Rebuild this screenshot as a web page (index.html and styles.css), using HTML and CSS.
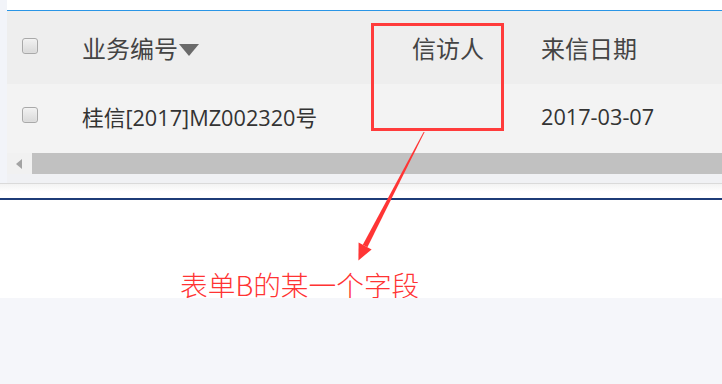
FILE: index.html
```html
<!DOCTYPE html>
<html>
<head>
<meta charset="utf-8" />
<title>表单字段</title>
<link rel="stylesheet" href="styles.css">
</head>
<body>
<div class="page">
  <div class="panel">
    <div class="panel_top"></div>
    <div class="grid">
      <div class="row head">
        <div class="cell chk"><span class="box"></span></div>
        <div class="cell">业务编号<span class="sort"></span></div>
        <div class="cell right">信访人</div>
        <div class="cell date">来信日期</div>
      </div>
      <div class="row body_row">
        <div class="cell chk"><span class="box"></span></div>
        <div class="cell">桂信[2017]MZ002320号</div>
        <div class="cell right"></div>
        <div class="cell date">2017-03-07</div>
      </div>
      <div class="scroll">
        <div class="scroll_btn"><span class="arrow_left"></span></div>
        <div class="scroll_thumb"></div>
      </div>
      <div class="grid_foot"></div>
    </div>
  </div>
  <div class="shade"></div>
  <div class="note_area">
    <div class="caption">表单B的某一个字段</div>
  </div>
  <div class="bottom"></div>

  <!-- 标注：红框和箭头 -->
  <div class="mark_box"></div>
  <svg class="mark_arrow" width="722" height="384" viewBox="0 0 722 384">
    <polygon fill="#ff3535" points="423.6,132 424.6,132 367.4,247.2 362.8,244.8" />
    <polygon fill="#ff3535" points="358.6,242.6 371.6,249.4 358.4,260.5" />
  </svg>
</div>
</body>
</html>
```

FILE: styles.css
```css
*{margin:0;padding:0;box-sizing:border-box;}
html,body{width:100%;height:100%;}
body{background:#fff;font-family:"Open Sans","Noto Sans CJK SC",sans-serif;overflow:hidden;}
.page{position:relative;width:722px;height:384px;display:flex;flex-direction:column;}

.panel{background:#f2f4f9;padding-left:7px;}
.panel_top{height:10px;background:#fff;}
.grid{border-top:1px solid #2a95e6;background:#f0f1f4;}
.row{display:grid;grid-template-columns:75px 288px 135px 1fr;}
.head{height:73px;background:#eeeeee;font-size:24px;color:#444;}
.body_row{height:69px;background:#f3f3f3;font-size:21.7px;color:#333;}
.cell{display:flex;align-items:center;white-space:nowrap;}
.body_row .cell{padding-bottom:5px;}
.chk{padding-left:15px;}
.head .chk{padding-bottom:3px;}
.body_row .chk{padding-bottom:8px;}
.right{justify-content:flex-end;padding-right:21px;}
.date{padding-left:36px;}
.box{display:block;width:16px;height:16px;border:1px solid #a9a9a9;border-radius:3px;background:linear-gradient(#f2f2f2,#d9d9d9);box-shadow:inset 0 0 1px #fff;}
.sort{display:inline-block;width:0;height:0;margin-left:1px;margin-top:4px;border-left:10px solid transparent;border-right:10px solid transparent;border-top:12px solid #6a6a6a;}

.scroll{display:flex;height:21px;}
.scroll_btn{width:25px;background:#f1f1f1;display:flex;align-items:center;padding-left:9px;}
.arrow_left{display:block;width:0;height:0;border-top:5px solid transparent;border-bottom:5px solid transparent;border-right:6px solid #a3a3a3;}
.scroll_thumb{flex:1;background:#c1c1c1;}
.grid_foot{height:9px;background:#f0f1f4;}

.shade{height:17px;border-top:1px solid #dadada;border-bottom:2px solid #1e3c78;background:linear-gradient(#f3f3f3,#fff 60%);}
.note_area{height:98px;padding-left:180px;padding-top:71px;}
.caption{font-family:"Noto Sans CJK SC",sans-serif;font-weight:300;font-size:27.7px;line-height:27px;color:#ff3333;white-space:nowrap;}
.bottom{flex:1;background:#f5f6fa;}

.mark_box{position:absolute;left:371px;top:23px;width:133px;height:108px;border:3px solid #ff3b3b;}
.mark_arrow{position:absolute;left:0;top:0;}
```
